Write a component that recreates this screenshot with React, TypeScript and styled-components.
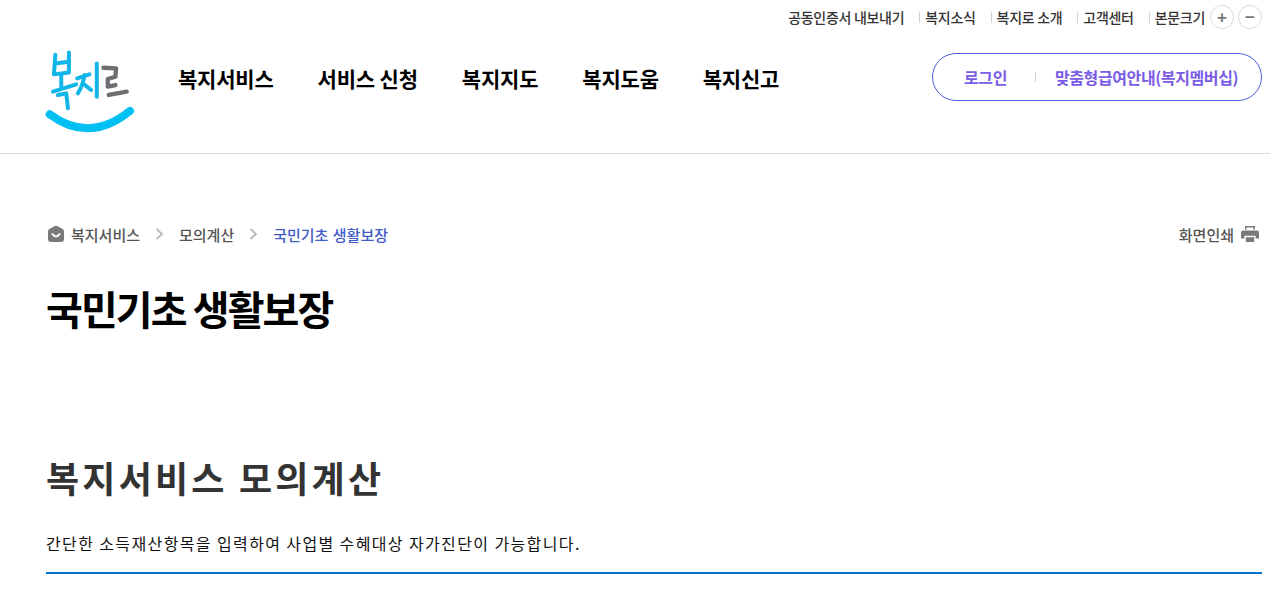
import { createGlobalStyle } from 'styled-components';
import styled from 'styled-components';

const GlobalStyle = createGlobalStyle`
  html, body {
    margin: 0;
    padding: 0;
    background: #fff;
    font-family: 'Noto Sans CJK KR', 'Noto Sans', sans-serif;
    color: #000;
    overflow: hidden;
  }
  * { box-sizing: border-box; }
`;

const TOP_LINKS = ['복지소식', '복지로 소개', '고객센터', '본문크기'];
const NAV_ITEMS = ['복지서비스', '서비스 신청', '복지지도', '복지도움', '복지신고'];

const Logo = () => (
  <LogoSvg viewBox="130 30 280 255" role="img" aria-label="복지로">
    <g fill="none" stroke="#12b5e8" strokeWidth="12" strokeLinecap="round" strokeLinejoin="round">
      <path d="M167 44 L163 103 L208 97 L208 37" />
      <path d="M167 70 L208 65" />
      <path d="M185 105 L185 140" />
      <path d="M160 155 L230 133" />
      <path d="M175 165 L200 160 L205 205" />
      <path d="M233 115 L270 103" />
      <path d="M255 105 C252 125 245 145 235 160" />
      <path d="M250 130 L275 150" />
      <path d="M292 70 L292 170" />
    </g>
    <g fill="none" stroke="#6d6e71" strokeWidth="13" strokeLinecap="round" strokeLinejoin="round">
      <path d="M312 83 L350 85 L348 110 L325 117 L325 140 L348 135" />
      <path d="M328 165 L382 155" />
    </g>
    <path d="M150 223 Q270 312 392 213" fill="none" stroke="#00bff3" strokeWidth="24" strokeLinecap="round" />
  </LogoSvg>
);

const HomeIcon = () => (
  <svg width="18" height="18" viewBox="0 0 18 18" aria-hidden="true">
    <path d="M7.4 1.2 Q9 .2 10.6 1.2 L15.6 4 Q17 4.9 17 6.4 V14.6 Q17 17 14.6 17 H3.4 Q1 17 1 14.6 V6.4 Q1 4.9 2.4 4 Z" fill="#7a7a7a" />
    <path d="M5.4 9 Q9 13.8 12.6 9" fill="none" stroke="#fff" strokeWidth="2" strokeLinecap="round" />
  </svg>
);

const Chevron = () => (
  <svg width="9" height="12" viewBox="0 0 9 12" aria-hidden="true">
    <path d="M1.5 1 L7 6 L1.5 11" fill="none" stroke="#b9b9b9" strokeWidth="1.8" />
  </svg>
);

const PrintIcon = () => (
  <svg width="18" height="18" viewBox="0 0 18 18" aria-hidden="true">
    <path d="M4 1 H14 V4.5 H12.4 V2.6 H5.6 V4.5 H4 Z" fill="#7a7a7a" />
    <path d="M2 5.4 H16 Q18 5.4 18 7.4 V13.4 H14.6 V10.8 H3.4 V13.4 H0 V7.4 Q0 5.4 2 5.4 Z" fill="#7a7a7a" />
    <path d="M4.8 12.2 H13.2 V17 H4.8 Z" fill="#7a7a7a" />
  </svg>
);

export default function App() {
  return (
    <>
      <GlobalStyle />
      <Page>
        <Header>
          <TopBar>
            <TopLinks>
              <TopLink $first>공동인증서 내보내기</TopLink>
              {TOP_LINKS.map((label) => (
                <TopLink key={label}>{label}</TopLink>
              ))}
            </TopLinks>
            <ZoomButton>+</ZoomButton>
            <ZoomButton>−</ZoomButton>
          </TopBar>
          <MainBar>
            <Logo />
            <Nav>
              {NAV_ITEMS.map((label) => (
                <NavItem key={label}>{label}</NavItem>
              ))}
            </Nav>
            <AuthBox>
              <AuthLink>로그인</AuthLink>
              <AuthDivider />
              <AuthLink>맞춤형급여안내(복지멤버십)</AuthLink>
            </AuthBox>
          </MainBar>
        </Header>
        <Content>
          <CrumbRow>
            <Crumbs>
              <HomeIcon />
              <Crumb>복지서비스</Crumb>
              <Chevron />
              <Crumb>모의계산</Crumb>
              <Chevron />
              <Crumb $current>국민기초 생활보장</Crumb>
            </Crumbs>
            <PrintLink>
              화면인쇄
              <PrintIcon />
            </PrintLink>
          </CrumbRow>
          <PageTitle>국민기초 생활보장</PageTitle>
          <SectionTitle>복지서비스 모의계산</SectionTitle>
          <Intro>간단한 소득재산항목을 입력하여 사업별 수혜대상 자가진단이 가능합니다.</Intro>
          <Rule />
        </Content>
      </Page>
    </>
  );
}

const Page = styled.div`
  width: 1270px;
  height: 609px;
  overflow: hidden;
`;

const Header = styled.header`
  height: 154px;
  border-bottom: 1px solid #dcdcdc;
`;

const TopBar = styled.div`
  height: 34px;
  padding: 0 8px 0 0;
  display: flex;
  justify-content: flex-end;
  align-items: center;
  gap: 4px;
`;

const TopLinks = styled.div`
  display: flex;
  gap: 21px;
  margin-right: 1px;
`;

const TopLink = styled.span<{ $first?: boolean }>`
  position: relative;
  font-size: 14px;
  font-weight: 500;
  letter-spacing: -0.3px;
  line-height: 20px;
  color: #333;
  &::before {
    content: '';
    display: ${(p) => (p.$first ? 'none' : 'block')};
    position: absolute;
    left: -6px;
    top: 5px;
    width: 1px;
    height: 11px;
    background: #d0d0d0;
  }
`;

const ZoomButton = styled.span`
  width: 24px;
  height: 24px;
  border: 1px solid #d9d9d9;
  border-radius: 50%;
  display: flex;
  align-items: center;
  justify-content: center;
  font-family: 'Liberation Sans', sans-serif;
  font-size: 17px;
  font-weight: 700;
  line-height: 1;
  color: #777;
`;

const MainBar = styled.div`
  height: 119px;
  padding: 16px 8px 0 43px;
  display: flex;
  align-items: flex-start;
`;

const LogoSvg = styled.svg`
  width: 93px;
  height: 85px;
  flex: none;
`;

const Nav = styled.nav`
  margin: 10px 0 0 42px;
  display: flex;
  gap: 44px;
`;

const NavItem = styled.a`
  font-size: 21px;
  font-weight: 700;
  letter-spacing: -0.2px;
  line-height: 36px;
  color: #000;
`;

const AuthBox = styled.div`
  margin: 3px 0 0 auto;
  width: 330px;
  height: 48px;
  padding: 0 0 0 31px;
  border: 1px solid #4a5fd8;
  border-radius: 24px;
  display: flex;
  align-items: center;
`;

const AuthLink = styled.a`
  font-size: 16px;
  font-weight: 700;
  letter-spacing: -0.4px;
  white-space: nowrap;
  color: #7b5ce6;
`;

const AuthDivider = styled.span`
  width: 1px;
  height: 10px;
  margin: 0 19px 0 28px;
  background: #cfcfcf;
`;

const Content = styled.main`
  padding: 0 8px 0 46px;
`;

const CrumbRow = styled.div`
  margin-top: 67px;
  height: 26px;
  padding: 0 3px 0 1px;
  display: flex;
  align-items: center;
  justify-content: space-between;
`;

const Crumbs = styled.div`
  display: flex;
  align-items: center;
  & > svg:first-child { margin-right: 6px; }
  & > svg:not(:first-child) { margin: 0 15px; }
`;

const Crumb = styled.span<{ $current?: boolean }>`
  font-size: 15px;
  font-weight: 500;
  letter-spacing: 0;
  word-spacing: 1px;
  color: ${(p) => (p.$current ? '#3f5bc8' : '#555')};
`;

const PrintLink = styled.span`
  display: flex;
  align-items: center;
  gap: 7px;
  font-size: 15px;
  font-weight: 500;
  color: #555;
`;

const PageTitle = styled.h1`
  margin: 33px 0 0;
  font-size: 40px;
  font-weight: 700;
  letter-spacing: -1.9px;
  line-height: 56px;
  color: #000;
`;

const SectionTitle = styled.h2`
  margin: 116px 0 0;
  font-size: 36px;
  font-weight: 700;
  letter-spacing: 3.2px;
  line-height: 50px;
  color: #333;
`;

const Intro = styled.p`
  margin: 29px 0 0;
  font-size: 16px;
  font-weight: 400;
  letter-spacing: 1.38px;
  line-height: 24px;
  color: #111;
`;

const Rule = styled.hr`
  margin: 17px 0 0;
  border: 0;
  height: 2px;
  background: #0073cf;
`;
